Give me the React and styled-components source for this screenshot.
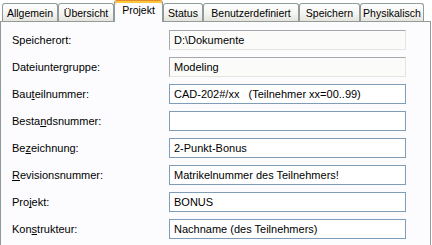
import React from 'react';
import styled, { createGlobalStyle } from 'styled-components';

const Global = createGlobalStyle`
  html, body {
    margin: 0;
    background: #ffffff;
  }
  body {
    font-family: 'Liberation Sans', Arial, sans-serif;
    font-size: 11px;
    color: #000;
  }
`;

const Dialog = styled.div`
  width: 432px;
  height: 245px;
  overflow: hidden;
`;

const TabStrip = styled.div`
  display: flex;
  align-items: flex-end;
  height: 21px;
  padding-left: 2px;
`;

const Tab = styled.div`
  position: relative;
  box-sizing: border-box;
  width: ${(p) => p.$w}px;
  height: ${(p) => (p.$active ? 22 : 18)}px;
  margin-bottom: ${(p) => (p.$active ? -1 : 0)}px;
  z-index: ${(p) => (p.$active ? 2 : 1)};
  border: 1px solid #919b9c;
  border-bottom: none;
  border-top-color: ${(p) => (p.$active ? '#e68b2c' : '#919b9c')};
  border-radius: 3px 3px 0 0;
  background: ${(p) =>
    p.$active ? '#fcfcfe' : 'linear-gradient(#ffffff, #f3f3ef 60%, #e4e3dc)'};
  box-shadow: ${(p) => (p.$active ? 'inset 0 2px 0 #ffc83c' : 'none')};
  display: flex;
  justify-content: center;
  align-items: center;
  font-size: 10.5px;
  padding-top: ${(p) => (p.$active ? 0 : 1)}px;
  padding-bottom: ${(p) => (p.$active ? 3 : 0)}px;
  white-space: nowrap;
`;

const Panel = styled.div`
  box-sizing: border-box;
  width: 431px;
  height: 240px;
  border: 1px solid #919b9c;
  background: #fcfcfe;
  padding: 8px 0 0 11px;
  display: grid;
  grid-template-columns: 157px 237px;
  grid-auto-rows: 20px;
  row-gap: 7px;
  align-items: center;
`;

const Label = styled.label`
  white-space: nowrap;
`;

const Key = styled.u`
  text-decoration: underline;
  text-decoration-skip-ink: none;
`;

const Field = styled.input`
  box-sizing: border-box;
  width: 237px;
  height: 20px;
  margin: 0;
  padding: 0 4px;
  font: inherit;
  color: #000;
  white-space: pre;
  background: ${(p) => (p.$readOnly ? '#fbfbf9' : '#ffffff')};
  border: 1px solid ${(p) => (p.$readOnly ? '#a7a6aa' : '#7f9db9')};
  border-right-color: ${(p) => (p.$readOnly ? '#e6e5e0' : '#7f9db9')};
  border-bottom-color: ${(p) => (p.$readOnly ? '#e6e5e0' : '#7f9db9')};
  outline: none;
`;

const tabs = [
  { name: 'Allgemein', w: 56 },
  { name: 'Übersicht', w: 56 },
  { name: 'Projekt', w: 49, active: true },
  { name: 'Status', w: 40 },
  { name: 'Benutzerdefiniert', w: 96 },
  { name: 'Speichern', w: 61 },
  { name: 'Physikalisch', w: 64 },
];

const rows = [
  { label: ['Speicherort:'], value: 'D:\\Dokumente', ro: true },
  { label: ['Dateiuntergruppe:'], value: 'Modeling', ro: true },
  { label: ['Bau', 't', 'eilnummer:'], value: 'CAD-202#/xx   (Teilnehmer xx=00..99)' },
  { label: ['Besta', 'n', 'dsnummer:'], value: '' },
  { label: ['Be', 'z', 'eichnung:'], value: '2-Punkt-Bonus' },
  { label: ['', 'R', 'evisionsnummer:'], value: 'Matrikelnummer des Teilnehmers!' },
  { label: ['Pro', 'j', 'ekt:'], value: 'BONUS' },
  { label: ['Kon', 's', 'trukteur:'], value: 'Nachname (des Teilnehmers)' },
];

export default function App() {
  return (
    <Dialog>
      <Global />
      <TabStrip>
        {tabs.map((t) => (
          <Tab key={t.name} $w={t.w} $active={t.active}>
            {t.name}
          </Tab>
        ))}
      </TabStrip>
      <Panel>
        {rows.map((r, i) => (
          <React.Fragment key={i}>
            <Label>
              {r.label[0]}
              {r.label[1] && <Key>{r.label[1]}</Key>}
              {r.label[2]}
            </Label>
            <Field value={r.value} readOnly $readOnly={r.ro} />
          </React.Fragment>
        ))}
      </Panel>
    </Dialog>
  );
}
